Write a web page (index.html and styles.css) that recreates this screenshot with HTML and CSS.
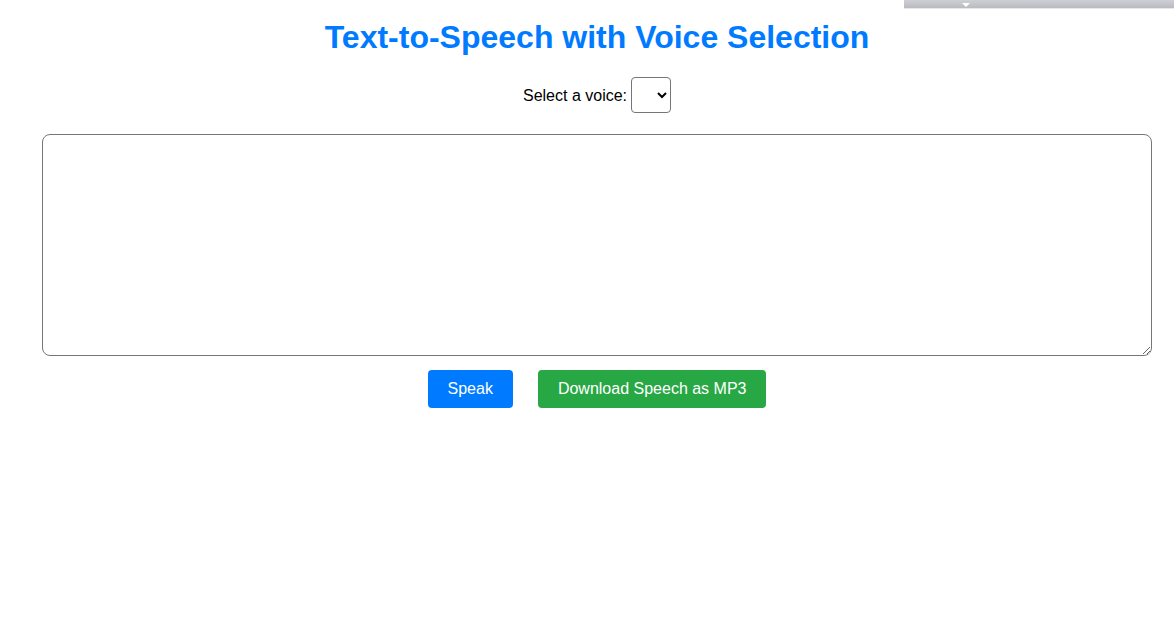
FILE: index.html
```html
<!DOCTYPE html>
<html lang="en">
<head>
<meta charset="utf-8">
<title>Text-to-Speech with Voice Selection</title>
<link rel="stylesheet" href="styles.css">
</head>
<body>
<div class="toolbar-strip"><span class="caret"></span></div>
<main class="app">
  <h1 class="title">Text-to-Speech with Voice Selection</h1>
  <div class="voice-row">
    <label for="voice" class="voice-label">Select a voice:</label>
    <select id="voice" class="voice-select"></select>
  </div>
  <textarea class="text-input"></textarea>
  <div class="actions">
    <button class="btn btn-speak">Speak</button>
    <button class="btn btn-download">Download Speech as MP3</button>
  </div>
</main>
</body>
</html>
```
FILE: styles.css
```css
html, body {
  margin: 0;
  padding: 0;
  background: #fff;
}

body {
  font-family: "Liberation Sans", Arial, sans-serif;
  color: #000;
}

.toolbar-strip {
  position: absolute;
  top: 0;
  right: 0;
  width: 270px;
  height: 8px;
  background: linear-gradient(#cfd0d4, #b9bbc1);
  border-bottom: 1px solid #e6e7ea;
}

.toolbar-strip .caret {
  position: absolute;
  left: 58px;
  top: 3px;
  border-left: 4px solid transparent;
  border-right: 4px solid transparent;
  border-top: 4px solid #fff;
}

.app {
  margin: 0 22px 0 42px;
  display: flex;
  flex-direction: column;
  align-items: center;
}

.title {
  margin: 19px 0 0;
  font-size: 32px;
  font-weight: bold;
  color: #007bff;
  line-height: 37px;
}

.voice-row {
  margin-top: 21px;
  display: flex;
  align-items: center;
  gap: 4px;
  font-size: 16px;
}

.voice-label {
  padding-top: 2px;
}

.voice-select {
  width: 40px;
  height: 36px;
  border: 1px solid #767676;
  border-radius: 4px;
  background: #fff;
  font-family: inherit;
  font-size: 16px;
}

.text-input {
  margin-top: 21px;
  width: 100%;
  height: 222px;
  box-sizing: border-box;
  border: 1px solid #767676;
  border-radius: 8px;
  padding: 8px;
  font-family: inherit;
  font-size: 16px;
  resize: vertical;
}

.actions {
  margin-top: 14px;
  display: flex;
  gap: 25px;
}

.btn {
  height: 38px;
  padding: 0 20px;
  border: none;
  border-radius: 4px;
  color: #fff;
  font-family: inherit;
  font-size: 16px;
  cursor: pointer;
}

.btn-speak {
  background: #007bff;
}

.btn-download {
  background: #28a745;
}
```
